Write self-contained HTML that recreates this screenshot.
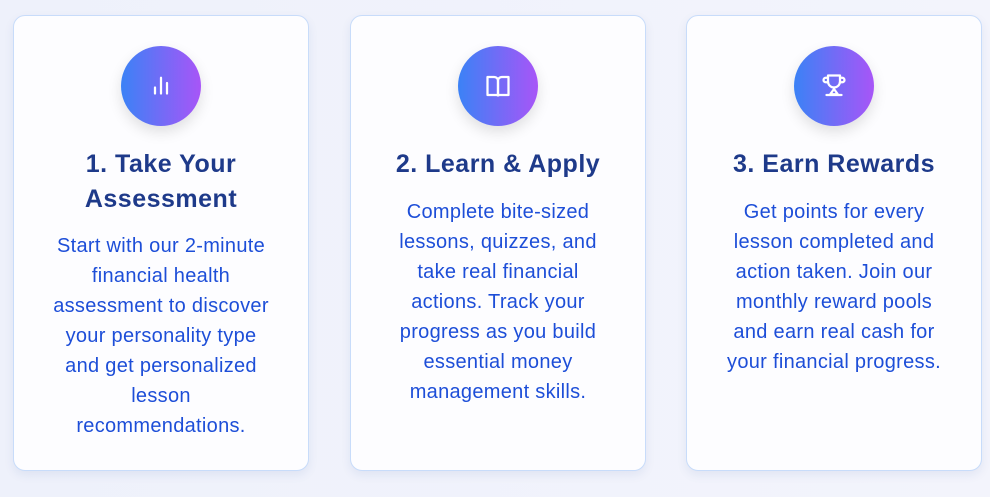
<!DOCTYPE html>
<html><head><style>
html,body{margin:0;padding:0;width:990px;height:497px;overflow:hidden;background:linear-gradient(90deg,#eef1fb,#f3f4fc);font-family:"Liberation Sans",sans-serif}
.card{position:absolute;top:15px;width:296px;height:456px;box-sizing:border-box;background:#fdfdff;border:1px solid #c8dcfa;border-radius:12px;box-shadow:0 4px 10px rgba(30,58,138,0.08);text-align:center}
.ic{position:absolute;left:50%;top:30px;margin-left:-40px;width:80px;height:80px;border-radius:50%;background:linear-gradient(90deg,#3b82f6,#a855f7);box-shadow:0 6px 14px rgba(0,0,0,0.12)}
.ic svg{position:absolute;left:22px;top:22px}
h3{position:absolute;top:131px;left:0;right:0;margin:0;font-size:25px;line-height:35px;font-weight:bold;color:#1e3a8a;letter-spacing:0.5px;white-space:nowrap}
p{position:absolute;left:0;right:0;margin:0;font-size:20px;line-height:30px;color:#1d4ed8;letter-spacing:0.3px;white-space:nowrap}
</style></head><body>
<div class="card" style="left:13px">
 <div class="ic"><svg width="36" height="36" viewBox="0 0 24 24" fill="none" stroke="#fff" stroke-width="1.5" stroke-linecap="round"><path d="M8 17v-4M12 17V6.5M16 17v-7"/></svg></div>
 <h3>1. Take Your<br>Assessment</h3>
 <p style="top:215px">Start with our 2-minute<br>financial health<br>assessment to discover<br>your personality type<br>and get personalized<br>lesson<br>recommendations.</p>
</div>
<div class="card" style="left:350px">
 <div class="ic"><svg width="36" height="36" viewBox="0 0 24 24" fill="none" stroke="#fff" stroke-width="1.5" stroke-linejoin="round"><path d="M5 6h4.5A2.5 2.5 0 0 1 12 8.5V18H5z"/><path d="M19 6h-4.5A2.5 2.5 0 0 0 12 8.5V18h7z"/><path d="M12 18v1"/></svg></div>
 <h3>2. Learn &amp; Apply</h3>
 <p style="top:181px">Complete bite-sized<br>lessons, quizzes, and<br>take real financial<br>actions. Track your<br>progress as you build<br>essential money<br>management skills.</p>
</div>
<div class="card" style="left:686px">
 <div class="ic"><svg width="36" height="36" viewBox="0 0 24 24" fill="none" stroke="#fff" stroke-width="1.5" stroke-linecap="round" stroke-linejoin="round"><path d="M8 5h8v4a4 4 0 0 1-8 0z"/><path d="M8 6.5H6.5a1.5 1.5 0 0 0 0 3H8M16 6.5h1.5a1.5 1.5 0 0 1 0 3H16"/><path d="M12 13v1l-2.5 3.5h5L12 14M7 18h10"/></svg></div>
 <h3>3. Earn Rewards</h3>
 <p style="top:181px">Get points for every<br>lesson completed and<br>action taken. Join our<br>monthly reward pools<br>and earn real cash for<br>your financial progress.</p>
</div>
</body></html>
